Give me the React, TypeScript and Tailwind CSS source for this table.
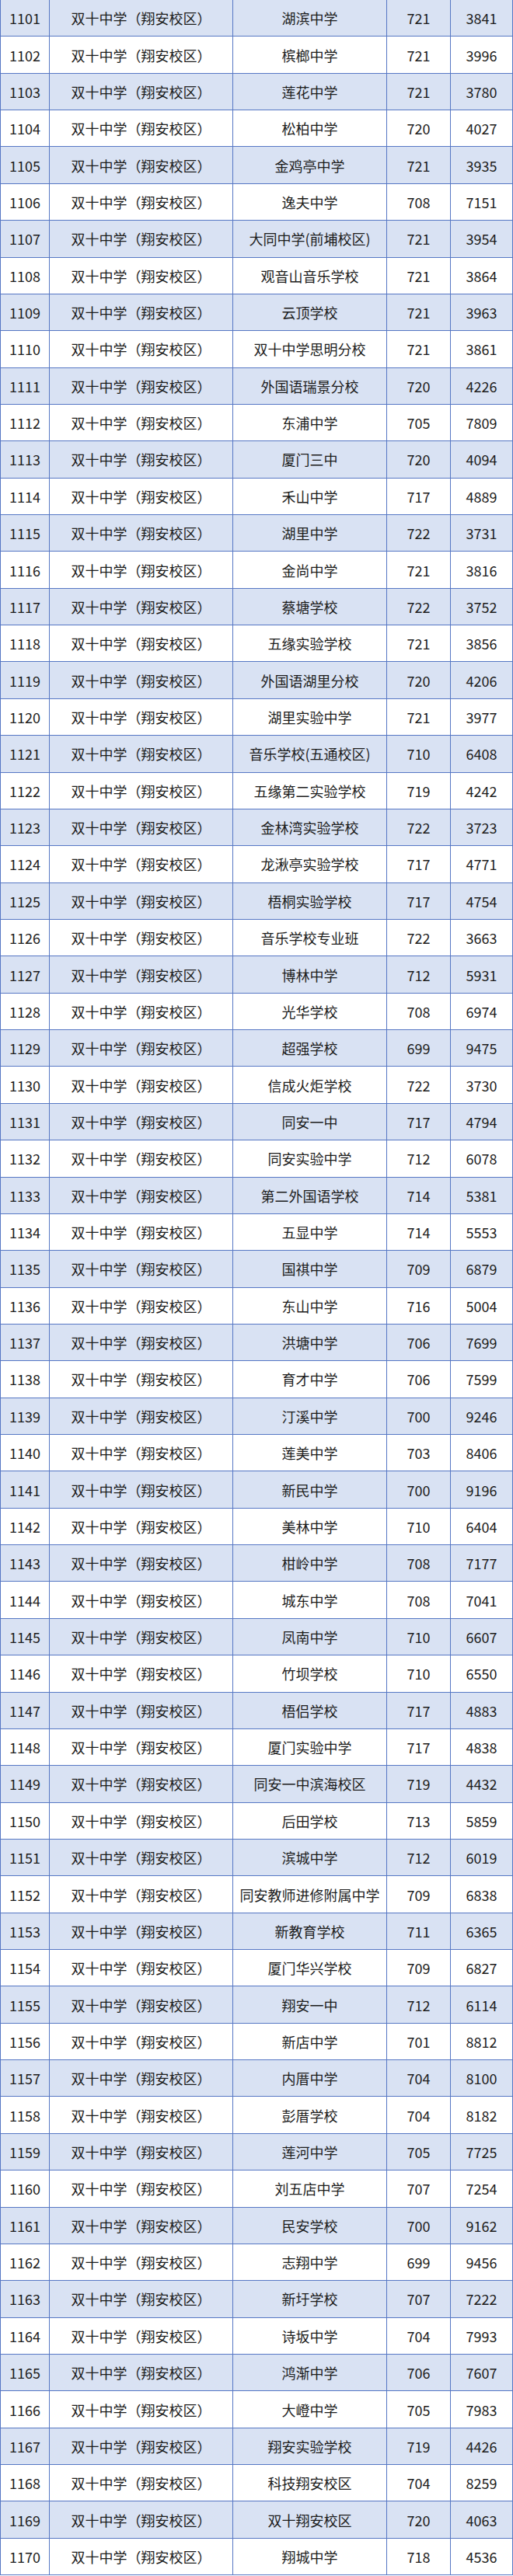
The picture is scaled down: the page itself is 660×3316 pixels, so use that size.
import React from 'react';

const rows: [number, string, number, number][] = [
  [1101, '湖滨中学', 721, 3841],
  [1102, '槟榔中学', 721, 3996],
  [1103, '莲花中学', 721, 3780],
  [1104, '松柏中学', 720, 4027],
  [1105, '金鸡亭中学', 721, 3935],
  [1106, '逸夫中学', 708, 7151],
  [1107, '大同中学(前埔校区)', 721, 3954],
  [1108, '观音山音乐学校', 721, 3864],
  [1109, '云顶学校', 721, 3963],
  [1110, '双十中学思明分校', 721, 3861],
  [1111, '外国语瑞景分校', 720, 4226],
  [1112, '东浦中学', 705, 7809],
  [1113, '厦门三中', 720, 4094],
  [1114, '禾山中学', 717, 4889],
  [1115, '湖里中学', 722, 3731],
  [1116, '金尚中学', 721, 3816],
  [1117, '蔡塘学校', 722, 3752],
  [1118, '五缘实验学校', 721, 3856],
  [1119, '外国语湖里分校', 720, 4206],
  [1120, '湖里实验中学', 721, 3977],
  [1121, '音乐学校(五通校区)', 710, 6408],
  [1122, '五缘第二实验学校', 719, 4242],
  [1123, '金林湾实验学校', 722, 3723],
  [1124, '龙湫亭实验学校', 717, 4771],
  [1125, '梧桐实验学校', 717, 4754],
  [1126, '音乐学校专业班', 722, 3663],
  [1127, '博林中学', 712, 5931],
  [1128, '光华学校', 708, 6974],
  [1129, '超强学校', 699, 9475],
  [1130, '信成火炬学校', 722, 3730],
  [1131, '同安一中', 717, 4794],
  [1132, '同安实验中学', 712, 6078],
  [1133, '第二外国语学校', 714, 5381],
  [1134, '五显中学', 714, 5553],
  [1135, '国祺中学', 709, 6879],
  [1136, '东山中学', 716, 5004],
  [1137, '洪塘中学', 706, 7699],
  [1138, '育才中学', 706, 7599],
  [1139, '汀溪中学', 700, 9246],
  [1140, '莲美中学', 703, 8406],
  [1141, '新民中学', 700, 9196],
  [1142, '美林中学', 710, 6404],
  [1143, '柑岭中学', 708, 7177],
  [1144, '城东中学', 708, 7041],
  [1145, '凤南中学', 710, 6607],
  [1146, '竹坝学校', 710, 6550],
  [1147, '梧侣学校', 717, 4883],
  [1148, '厦门实验中学', 717, 4838],
  [1149, '同安一中滨海校区', 719, 4432],
  [1150, '后田学校', 713, 5859],
  [1151, '滨城中学', 712, 6019],
  [1152, '同安教师进修附属中学', 709, 6838],
  [1153, '新教育学校', 711, 6365],
  [1154, '厦门华兴学校', 709, 6827],
  [1155, '翔安一中', 712, 6114],
  [1156, '新店中学', 701, 8812],
  [1157, '内厝中学', 704, 8100],
  [1158, '彭厝学校', 704, 8182],
  [1159, '莲河中学', 705, 7725],
  [1160, '刘五店中学', 707, 7254],
  [1161, '民安学校', 700, 9162],
  [1162, '志翔中学', 699, 9456],
  [1163, '新圩学校', 707, 7222],
  [1164, '诗坂中学', 704, 7993],
  [1165, '鸿渐中学', 706, 7607],
  [1166, '大嶝中学', 705, 7983],
  [1167, '翔安实验学校', 719, 4426],
  [1168, '科技翔安校区', 704, 8259],
  [1169, '双十翔安校区', 720, 4063],
  [1170, '翔城中学', 718, 4536],
];

const cell = 'flex items-center justify-center border-r border-[#5677c4] whitespace-nowrap';

export default function App() {
  return (
    <div className="w-[660px] bg-white text-[18px] text-[#1c1c1c] font-['Noto_Sans_CJK_SC',sans-serif] leading-none">
      {rows.map(([no, school, score, rank], i) => (
        <div
          key={no}
          className={`grid grid-cols-[64px_236px_198px_82px_80px] h-[47.37px] border-b border-[#5677c4] ${i % 2 === 0 ? 'bg-[#d9e2f3]' : 'bg-white'}`}
        >
          <div className={`${cell} border-l`}>{no}</div>
          <div className={cell}>双十中学（翔安校区）</div>
          <div className={cell}>{school}</div>
          <div className={cell}>{score}</div>
          <div className={cell}>{rank}</div>
        </div>
      ))}
    </div>
  );
}
